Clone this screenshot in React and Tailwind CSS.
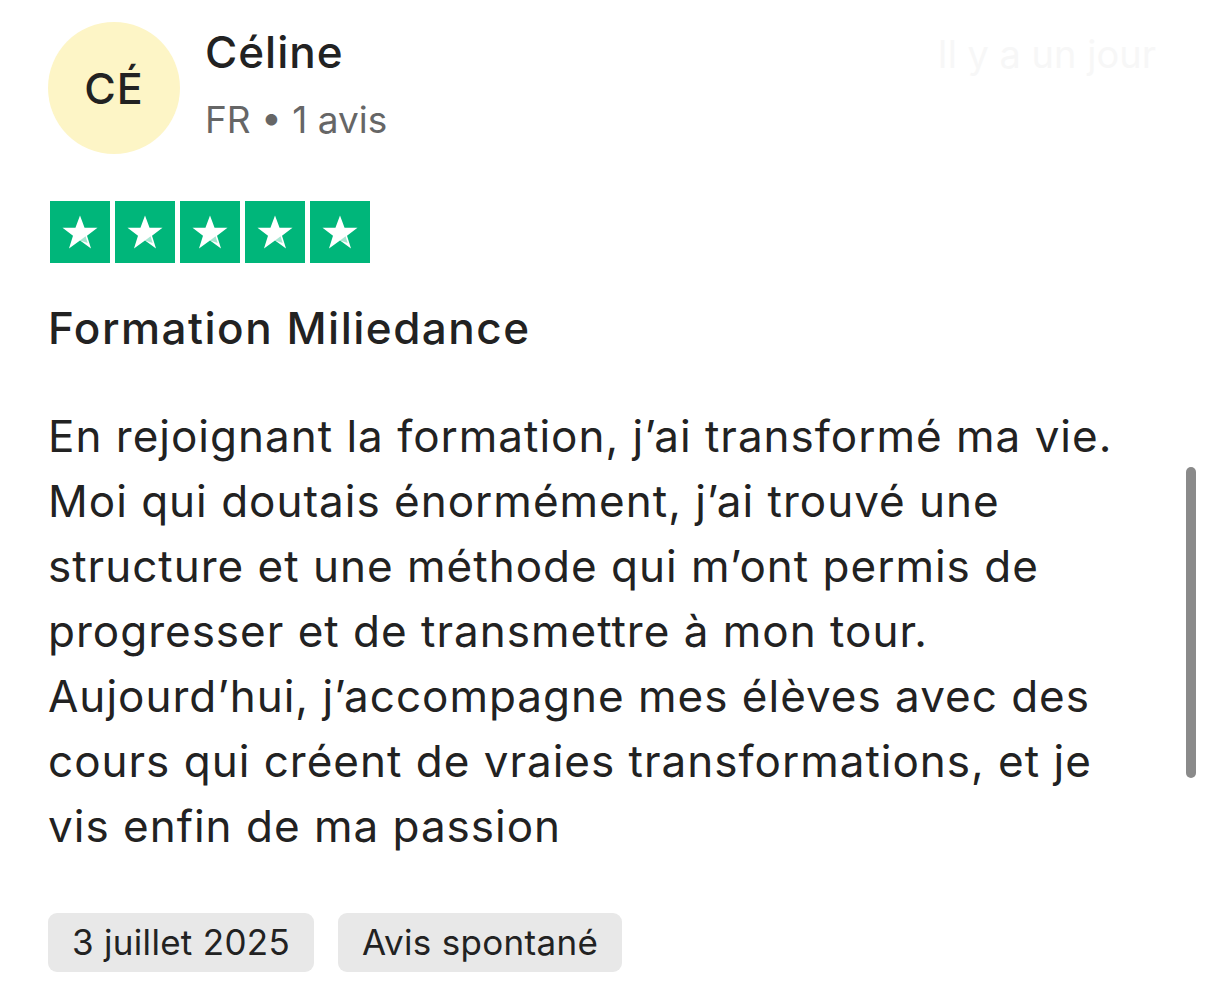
function Star() {
  return (
    <div className="w-[60px] h-[62px] bg-[#00b67a] flex items-center justify-center">
      <svg viewBox="0 0 24 24" className="w-[42px] h-[42px]">
        <path
          d="M12 2.5l2.6 7.1h7.4l-6 4.5 2.3 7.3L12 16.9l-6.3 4.5 2.3-7.3-6-4.5h7.4z"
          fill="#fff"
        />
        <path d="M15.2 14.4l1.2 3.9-4.4-1.4z" fill="#00b67a" opacity="0.35" />
      </svg>
    </div>
  );
}

export default function App() {
  return (
    <div className="relative w-[1206px] h-[1007px] bg-white overflow-hidden font-['Inter',sans-serif] text-[#222]">
      <div className="absolute right-[50px] top-[26px] text-[38px] text-[#f7f7f7]">
        Il y a un jour
      </div>
      <div className="absolute left-[1186px] top-[467px] w-[10px] h-[311px] rounded-full bg-[#8a8a8a]" />

      <div className="pl-[48px] pt-[22px]">
        <div className="flex items-start gap-[25px]">
          <div className="w-[132px] h-[132px] rounded-full bg-[#fdf5c6] flex items-center justify-center text-[43px] font-medium tracking-[1px]">
            CÉ
          </div>
          <div className="pt-[4px]">
            <div className="text-[44px] font-medium leading-[52px] tracking-[1px]">Céline</div>
            <div className="text-[37px] text-[#666] leading-[50px] mt-[17px]">FR • 1 avis</div>
          </div>
        </div>

        <div className="flex gap-[5px] mt-[47px] ml-[2px]">
          <Star />
          <Star />
          <Star />
          <Star />
          <Star />
        </div>

        <div className="mt-[38px] text-[44px] font-medium leading-[54px] tracking-[1.5px]">
          Formation Miliedance
        </div>

        <p className="mt-[49px] text-[44px] leading-[65px] tracking-[1px] whitespace-nowrap">
          En rejoignant la formation, j’ai transformé ma vie.
          <br />
          Moi qui doutais énormément, j’ai trouvé une
          <br />
          structure et une méthode qui m’ont permis de
          <br />
          progresser et de transmettre à mon tour.
          <br />
          Aujourd’hui, j’accompagne mes élèves avec des
          <br />
          cours qui créent de vraies transformations, et je
          <br />
          vis enfin de ma passion
        </p>

        <div className="flex gap-[24px] mt-[54px]">
          <div className="h-[59px] px-[24px] rounded-[9px] bg-[#e8e8e8] flex items-center text-[35px] tracking-[0.3px]">
            3 juillet 2025
          </div>
          <div className="h-[59px] px-[24px] rounded-[9px] bg-[#e8e8e8] flex items-center text-[35px] tracking-[0.3px]">
            Avis spontané
          </div>
        </div>
      </div>
    </div>
  );
}
